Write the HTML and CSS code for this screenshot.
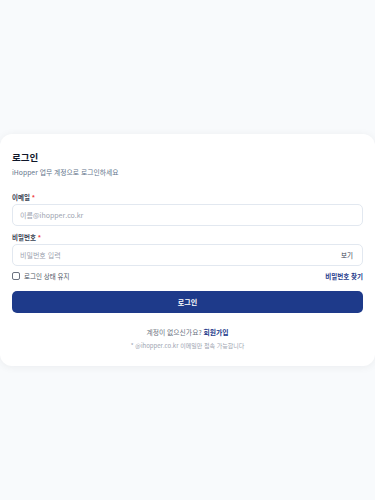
FILE: index.html
```html
<!DOCTYPE html>
<html lang="ko">
<head>
<meta charset="utf-8">
<link rel="stylesheet" href="styles.css">
</head>
<body>
<main class="page">
  <section class="card">
    <h1 class="title">로그인</h1>
    <p class="subtitle">iHopper 업무 계정으로 로그인하세요</p>
    <form class="form">
      <div class="field">
        <label class="label">이메일 <span class="req">*</span></label>
        <div class="input"><span class="ph">이름@ihopper.co.kr</span></div>
      </div>
      <div class="field">
        <label class="label">비밀번호 <span class="req">*</span></label>
        <div class="input"><span class="ph">비밀번호 입력</span><span class="show">보기</span></div>
      </div>
      <div class="row">
        <label class="check"><span class="box"></span>로그인 상태 유지</label>
        <a class="link">비밀번호 찾기</a>
      </div>
      <button type="button" class="btn">로그인</button>
    </form>
    <p class="signup">계정이 없으신가요? <a class="link">회원가입</a></p>
    <p class="note">* @ihopper.co.kr 이메일만 접속 가능합니다</p>
  </section>
</main>
</body>
</html>
```
FILE: styles.css
```css
* { box-sizing: border-box; margin: 0; padding: 0; }
html, body { height: 100%; }
body {
  background: #f8fafc;
  font-family: "Noto Sans CJK KR", "Noto Sans", sans-serif;
  color: #111827;
}
.page {
  min-height: 100vh;
  display: flex;
  align-items: center;
}
.card {
  width: 100%;
  height: 232px;
  background: #fff;
  border-radius: 12px;
  box-shadow: 0 1px 8px rgba(15, 23, 42, 0.06);
  padding: 16px 12px 0;
}
.title {
  font-size: 9.5px;
  font-weight: 700;
  line-height: 14px;
  color: #0f172a;
}
.subtitle {
  margin-top: 3px;
  font-size: 6.8px;
  line-height: 11px;
  color: #64748b;
}
.form {
  margin-top: 15px;
  display: flex;
  flex-direction: column;
}
.field { display: flex; flex-direction: column; gap: 3px; margin-bottom: 7px; }
.label {
  font-size: 6.5px;
  font-weight: 700;
  line-height: 8px;
  color: #374151;
}
.req { color: #ef4444; }
.input {
  height: 22px;
  border: 1px solid #e2e8f0;
  border-radius: 5px;
  display: flex;
  align-items: center;
  justify-content: space-between;
  padding: 0 9px 0 7px;
  font-size: 7px;
}
.ph { color: #9ca3af; }
.show { color: #374151; font-size: 6.5px; }
.row {
  display: flex;
  justify-content: space-between;
  align-items: center;
  margin-top: -1px;
  height: 8px;
}
.check {
  display: flex;
  align-items: center;
  gap: 4px;
  font-size: 6.5px;
  color: #4b5563;
}
.box {
  width: 8px;
  height: 8px;
  border: 1px solid #6b7280;
  border-radius: 2px;
}
.link {
  font-size: 6.5px;
  font-weight: 700;
  color: #1e3a8a;
}
.btn {
  margin-top: 11px;
  height: 22px;
  border: none;
  border-radius: 5px;
  background: #1e3a8a;
  color: #fff;
  font-family: inherit;
  font-size: 7px;
  font-weight: 700;
}
.signup {
  margin-top: 14px;
  text-align: center;
  font-size: 6.8px;
  line-height: 10px;
  color: #6b7280;
}
.signup .link { font-size: 6.8px; }
.note {
  margin-top: 4px;
  text-align: center;
  font-size: 6px;
  line-height: 9px;
  color: #9ca3af;
}
```
